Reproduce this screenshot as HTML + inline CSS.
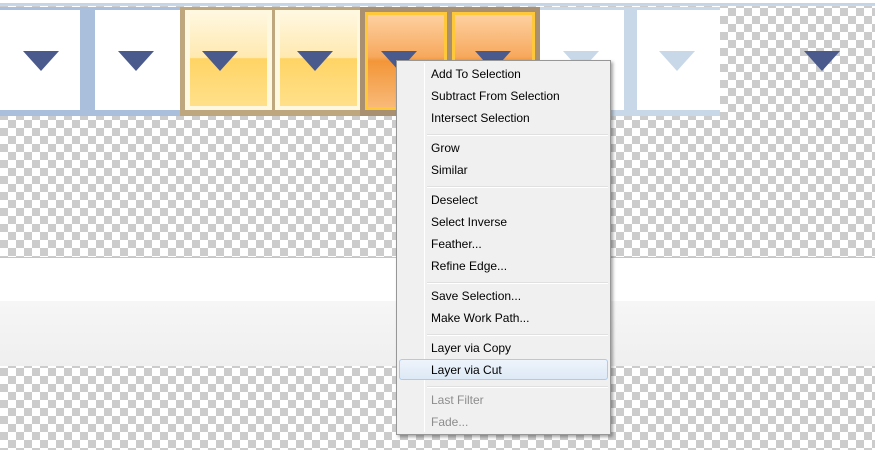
<!DOCTYPE html>
<html><head><style>
*{margin:0;padding:0;box-sizing:border-box}
body{width:875px;height:450px;overflow:hidden;position:relative;font-family:"Liberation Sans",sans-serif;
background-color:#fff;background-image:linear-gradient(45deg,#ccc 25%,transparent 25%,transparent 75%,#ccc 75%),linear-gradient(45deg,#ccc 25%,transparent 25%,transparent 75%,#ccc 75%);background-size:16px 16px;background-position:8px 0,0 8px}
.a{position:absolute}
.tri{position:absolute;width:0;height:0;border-left:18px solid transparent;border-right:18px solid transparent;border-top:20px solid #4a5a8c}
.menu{left:396px;top:60px;width:215px;height:375px;background:#f0f0f0;border:1px solid #979797;box-shadow:2px 2px 3px rgba(0,0,0,.35)}
.it{position:absolute;left:34px;font-size:12px;color:#000;line-height:14px}
.sep{position:absolute;left:30px;right:2px;height:2px;border-top:1px solid #e0e0e0;border-bottom:1px solid #fff}
</style></head><body>
<div class="a" style="left:0;top:0;width:875px;height:3px;background:#fff"></div>
<div class="a" style="left:0;top:3px;width:875px;height:3px;background:#c5d5e8;border-bottom:1px solid #9ee"></div>
<!-- blue tiles -->
<div class="a" style="left:0;top:7px;width:180px;height:109px;background:#aabfdc"></div>
<div class="a" style="left:0;top:10px;width:80px;height:100px;background:#fff"></div>
<div class="a" style="left:95px;top:10px;width:85px;height:100px;background:#fff"></div>
<div class="a" style="left:540px;top:7px;width:180px;height:109px;background:#c8d8e8"></div>
<div class="a" style="left:540px;top:10px;width:84px;height:100px;background:#fff"></div>
<div class="a" style="left:637px;top:10px;width:83px;height:100px;background:#fff"></div>
<!-- gold tiles -->
<div class="a" style="left:180px;top:7px;width:185px;height:109px;background:#bea77e"></div>
<div class="a" style="left:185px;top:10px;width:87px;height:100px;background:#fff8e0"></div>
<div class="a" style="left:190px;top:13px;width:77px;height:93px;background:linear-gradient(#fff7df,#ffe9b0 48%,#ffd465 49%,#ffe08a)"></div>
<div class="a" style="left:275px;top:10px;width:87px;height:100px;background:#fff8e0"></div>
<div class="a" style="left:280px;top:13px;width:77px;height:93px;background:linear-gradient(#fff7df,#ffe9b0 48%,#ffd465 49%,#ffe08a)"></div>
<!-- orange tiles -->
<div class="a" style="left:360px;top:7px;width:180px;height:109px;background:#a89070"></div>
<div class="a" style="left:365px;top:12px;width:82px;height:98px;background:#ffc83a"></div>
<div class="a" style="left:368px;top:15px;width:76px;height:92px;background:linear-gradient(#fdd0a0,#f7a95e 45%,#f39638 50%,#f8b978)"></div>
<div class="a" style="left:452px;top:12px;width:83px;height:98px;background:#ffc83a"></div>
<div class="a" style="left:455px;top:15px;width:77px;height:92px;background:linear-gradient(#fdd0a0,#f7a95e 45%,#f39638 50%,#f8b978)"></div>
<!-- arrows -->
<div class="tri" style="left:23px;top:51px"></div>
<div class="tri" style="left:118px;top:51px"></div>
<div class="tri" style="left:202px;top:51px;outline:0"></div>
<div class="tri" style="left:297px;top:51px"></div>
<div class="tri" style="left:381px;top:51px"></div>
<div class="tri" style="left:475px;top:51px"></div>
<div class="tri" style="left:563px;top:51px;border-top-color:#c8d8e8"></div>
<div class="tri" style="left:659px;top:51px;border-top-color:#c8d8e8"></div>
<div class="tri" style="left:804px;top:51px"></div>
<!-- lower band -->
<div class="a" style="left:0;top:257px;width:875px;height:1px;background:#6ee"></div>
<div class="a" style="left:0;top:258px;width:875px;height:43px;background:#fff"></div>
<div class="a" style="left:0;top:301px;width:875px;height:65px;background:linear-gradient(#f6f6f6,#efefef)"></div>
<!-- menu -->
<div class="a menu">
<div class="a" style="left:27px;top:2px;width:1px;height:369px;background:#e2e2e2;border-right:1px solid #fff"></div>
<div class="it" style="top:6px">Add To Selection</div>
<div class="it" style="top:28px">Subtract From Selection</div>
<div class="it" style="top:50px">Intersect Selection</div>
<div class="sep" style="top:73px"></div>
<div class="it" style="top:80px">Grow</div>
<div class="it" style="top:102px">Similar</div>
<div class="sep" style="top:125px"></div>
<div class="it" style="top:132px">Deselect</div>
<div class="it" style="top:154px">Select Inverse</div>
<div class="it" style="top:176px">Feather...</div>
<div class="it" style="top:198px">Refine Edge...</div>
<div class="sep" style="top:221px"></div>
<div class="it" style="top:228px">Save Selection...</div>
<div class="it" style="top:250px">Make Work Path...</div>
<div class="sep" style="top:273px"></div>
<div class="it" style="top:280px">Layer via Copy</div>
<div class="a" style="left:2px;top:298px;width:209px;height:21px;border:1px solid #aaccef;border-radius:3px;background:linear-gradient(#eef4fb,#dde9f6)"></div>
<div class="it" style="top:302px">Layer via Cut</div>
<div class="sep" style="top:325px"></div>
<div class="it" style="top:332px;color:#8d8d8d">Last Filter</div>
<div class="it" style="top:354px;color:#8d8d8d">Fade...</div>
</div>
</body></html>
